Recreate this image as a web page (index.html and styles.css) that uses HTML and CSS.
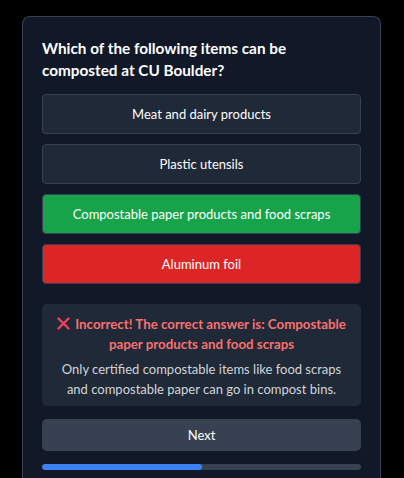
FILE: index.html
```html
<!DOCTYPE html>
<html>
<head>
<meta charset="utf-8">
<link rel="stylesheet" href="styles.css">
</head>
<body>
<div class="card">
  <h2 class="question">Which of the following items can be composted at CU Boulder?</h2>
  <div class="options">
    <button class="option">Meat and dairy products</button>
    <button class="option">Plastic utensils</button>
    <button class="option correct">Compostable paper products and food scraps</button>
    <button class="option wrong">Aluminum foil</button>
  </div>
  <div class="feedback">
    <p class="feedback-title"><svg class="x-icon" width="13" height="13" viewBox="0 0 13 13"><path d="M1.5 1.5L11.5 11.5M11.5 1.5L1.5 11.5" stroke="#f43f5e" stroke-width="2.4" stroke-linecap="round"/></svg> Incorrect! The correct answer is: Compostable paper products and food scraps</p>
    <p class="feedback-text">Only certified compostable items like food scraps and compostable paper can go in compost bins.</p>
  </div>
  <button class="next">Next</button>
  <div class="progress"><div class="progress-fill" style="width:50%"></div></div>
</div>
</body>
</html>
```
FILE: styles.css
```css
* { box-sizing: border-box; }
html, body { margin: 0; padding: 0; background: #000; height: 100%; overflow: hidden; }
body {
  font-family: Lato, "Noto Sans", sans-serif;
  font-size: 13px;
  color: #fff;
  padding: 16px 23px 0 22px;
}
.card {
  background: #111827;
  border: 1px solid #374151;
  border-bottom: none;
  border-radius: 8px 8px 0 0;
  padding: 20px 19px 20px 19px;
  width: 359px;
}
.question {
  margin: 0 0 13px;
  font-size: 15.3px;
  font-weight: 700;
  line-height: 22px;
}
.options { display: flex; flex-direction: column; gap: 10px; }
.option {
  font-family: inherit;
  font-size: 13px;
  color: #fff;
  background: #1f2937;
  border: 1px solid #374151;
  border-radius: 4px;
  height: 40px;
  width: 100%;
  text-align: center;
  padding: 0;
}
.option.correct { background: #16a34a; }
.option.wrong { background: #dc2626; }
.feedback {
  margin-top: 20px;
  background: #1f2937;
  border-radius: 5px;
  padding: 10px 12px 7px;
  text-align: center;
}
.feedback-title {
  margin: 0;
  color: #f87171;
  font-size: 13.3px;
  font-weight: 700;
  line-height: 20px;
}
.x-icon { vertical-align: -1px; margin-right: 2px; }
.feedback-text {
  margin: 5px 0 0;
  color: #d1d5db;
  line-height: 20px;
}
.next {
  display: block;
  margin-top: 13px;
  width: 100%;
  height: 32px;
  background: #374151;
  border: none;
  border-radius: 5px;
  color: #fff;
  font-family: inherit;
  font-size: 13px;
}
.progress {
  margin-top: 13px;
  height: 6px;
  background: #374151;
  border-radius: 3px;
  overflow: hidden;
}
.progress-fill { height: 100%; background: #3b82f6; border-radius: 3px; }
```
